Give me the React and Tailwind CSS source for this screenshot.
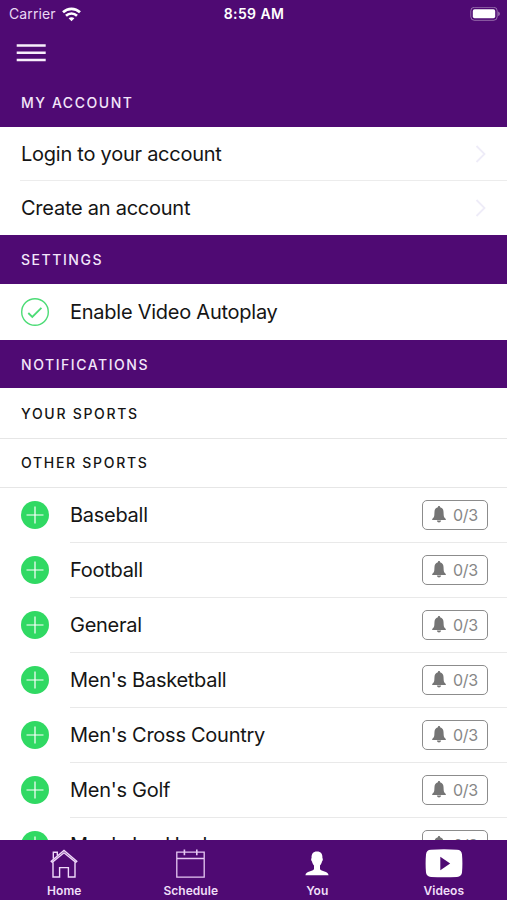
import React from "react";
import clsx from "clsx";

const sports = [
  "Baseball",
  "Football",
  "General",
  "Men's Basketball",
  "Men's Cross Country",
  "Men's Golf",
  "Men's Ice Hockey",
];

const WifiIcon = () => (
  <svg width="19" height="15" viewBox="0 0 19 15" fill="none" stroke="white" strokeWidth="2.6">
    <path d="M1 5.3C5.8 .7 13.2 .7 18 5.3" />
    <path d="M4 8.7C7.1 5.7 11.9 5.7 15 8.7" />
    <path d="M9.5 14.3L6.6 11.3C8.2 9.8 10.8 9.8 12.4 11.3Z" fill="white" stroke="none" />
  </svg>
)

const BatteryIcon = () => (
  <svg width="31" height="15" viewBox="0 0 31 15" fill="none">
    <rect x="0.8" y="0.3" width="26.4" height="13" rx="3.6" stroke="white" strokeOpacity="0.4" />
    <rect x="2.8" y="2.3" width="22.4" height="9" rx="1.8" fill="white" />
    <path d="M28.2 4.5v4.6c2.2-.9 2.2-3.7 0-4.6Z" fill="white" fillOpacity="0.45" />
  </svg>
)

const MenuIcon = () => (
  <svg width="30" height="20" viewBox="0 0 30 20" stroke="#f8effc" strokeWidth="2.4">
    <path d="M.7 2.5h29M.7 9.7h29M.7 17h29" />
  </svg>
)

const ChevronIcon = () => (
  <svg width="12" height="20" viewBox="0 0 12 20" fill="none" stroke="#eeecf8" strokeWidth="1.8">
    <path d="M1.5 2L9.5 10L1.5 18" />
  </svg>
)

const CheckIcon = () => (
  <svg width="28" height="28" viewBox="0 0 28 28" fill="none" stroke="#4cdc76">
    <circle cx="14" cy="14" r="13.3" strokeWidth="1.4" />
    <path d="M7.3 15l4 4L20.4 9.8" strokeWidth="1.8" />
  </svg>
)

const PlusIcon = () => (
  <svg className="mb-px" width="28" height="28" viewBox="0 0 28 28" fill="none">
    <circle cx="14" cy="14" r="14" fill="#30d963" />
    <path d="M14 5.5v17M5.5 14h17" stroke="white" strokeWidth="1.2" />
  </svg>
)

const BellIcon = () => (
  <svg className="mb-0.5" width="14" height="17" viewBox="0 0 14 17" fill="#757575">
    <path d="M7 0C6.3 0 5.9.5 5.9 1.2 3.6 1.8 2.6 3.5 2.5 5.7L2.3 9.2C2.2 11 1.2 12 .2 13.1V14h13.6v-.9c-1-1.1-2-2.1-2.1-3.9l-.2-3.5C11.4 3.5 10.4 1.8 8.1 1.2 8.1.5 7.7 0 7 0Z" />
    <path d="M4.8 14.6h4.4c-.3 1.2-1.1 1.9-2.2 1.9s-1.9-.7-2.2-1.9Z" />
  </svg>
)

const HomeIcon = () => (
  <svg width="28" height="30" viewBox="0 0 28 30" fill="none" stroke="#f0d9fa" strokeWidth="1.4">
    <path d="M1.2 12.2L14 1.5L26.8 12.2L25.7 13.4L14 3.8L2.3 13.4Z" />
    <path d="M3.3 9.8V3.3H7.3V6.5" />
    <path d="M3 13.2V28H9.6V18.6H18.4V28H25V13.2" />
  </svg>
)

const CalendarIcon = () => (
  <svg width="30" height="30" viewBox="0 0 30 30" fill="none" stroke="#e6c8f3" strokeWidth="1.3">
    <path d="M.8 3.2H28.2V28.1H.8ZM.8 9.5H28.2" />
    <path d="M8.4 .6V6.2M20.8 .6V6.2" strokeWidth="1.6" />
  </svg>
)

const PersonIcon = () => (
  <svg width="24" height="26" viewBox="0 0 24 26" fill="white">
    <path d="M12 .4C8 .4 6.3 3 6.6 7 5.8 7.5 6.1 9.7 7 10.6 7.4 12.4 8.1 13.7 9 14.6V17.9C7.8 20.7 1 19.7.4 24.2H23.6C23 19.7 16.2 20.7 15 17.9V14.6C15.9 13.7 16.6 12.4 17 10.6 17.9 9.7 18.2 7.5 17.4 7 17.7 3 16 .4 12 .4Z" />
  </svg>
)

const VideoIcon = () => (
  <svg width="38" height="30" viewBox="0 0 38 30">
    <path d="M6 .8Q19 -.2 32 .8Q36.6 1 37 5.5Q37.8 14.5 37 23.5Q36.6 27.5 32 27.9Q19 28.8 6 27.9Q1.4 27.5 1 23.5Q.2 14.5 1 5.5Q1.4 1 6 .8Z" fill="white" />
    <path d="M15.3 7.7V21.2L25.2 14.5Z" fill="#4f0a73" />
  </svg>
)

const SectionHeader = ({ children, className }) => (
  <div className={clsx("flex shrink-0 items-center bg-[#4f0a73] pl-[21px] text-sm font-medium tracking-[1.55px] text-[#f3e6fa]", className)}>
    {children}
  </div>
)

const SubHeader = ({ children, className }) => (
  <div className={clsx("flex shrink-0 items-center border-b border-[#e6e6e6] pl-[21px] text-sm font-medium tracking-[1.7px]", className)}>
    {children}
  </div>
)

const AccountRow = ({ label, last }) => (
  <div className="shrink-0 pl-5">
    <div className={clsx("flex h-[54px] items-center justify-between pr-5 pl-px", !last && "border-b border-[#ececec]")}>
      <span className="text-xl tracking-[-0.25px]">{label}</span>
      <ChevronIcon />
    </div>
  </div>
)

const SportRow = ({ name }) => (
  <div className="flex h-[55px] shrink-0 items-center pl-[21px]">
    <PlusIcon />
    <div className="ml-[21px] flex h-full flex-1 items-center justify-between border-b border-[#e9e9e9] pr-[19px]">
      <span className="text-xl tracking-[-0.27px]">{name}</span>
      <div className="flex h-[30px] w-[66px] items-center justify-center gap-[7px] rounded-[5px] border border-[#8c8c8c] text-base text-[#878787]">
        <BellIcon />
        <span className="tracking-[-0.3px]">0/3</span>
      </div>
    </div>
  </div>
)

const Tab = ({ icon, label }) => (
  <div className="flex flex-1 flex-col items-center pt-2">
    <div className="flex h-[31px] items-center">{icon}</div>
    <span className="mt-1 text-xs leading-4 font-semibold tracking-[0.05px] text-[#efdff8]">{label}</span>
  </div>
)

export default function App() {
  return (
    <div className="flex h-[900px] w-[507px] flex-col overflow-hidden bg-white font-['Inter','Liberation_Sans',sans-serif] text-[#151515]">
      <header className="h-[78px] shrink-0 bg-[#4f0a73] text-white">
        <div className="grid h-7 grid-cols-3 items-center pr-[6px] pl-[9px]">
          <div className="flex items-center gap-[6px] text-sm text-[#ead8f3]">
            <span className="tracking-[0.1px]">Carrier</span>
            <WifiIcon />
          </div>
          <span className="pr-0.5 text-center text-sm font-semibold tracking-[0.4px]">8:59 AM</span>
          <div className="flex justify-end"><BatteryIcon /></div>
        </div>
        <div className="pt-[15px] pl-4">
          <MenuIcon />
        </div>
      </header>

      <main className="flex min-h-0 flex-1 flex-col overflow-hidden">
        <SectionHeader className="h-[49px]">MY ACCOUNT</SectionHeader>
        <AccountRow label="Login to your account" />
        <AccountRow label="Create an account" last />
        <SectionHeader className="h-[49px]">SETTINGS</SectionHeader>
        <div className="flex h-14 shrink-0 items-center gap-[21px] pl-[21px]">
          <CheckIcon />
          <span className="text-xl tracking-[-0.25px]">Enable Video Autoplay</span>
        </div>
        <SectionHeader className="h-12 pt-px">NOTIFICATIONS</SectionHeader>
        <SubHeader className="h-[51px] pt-px">YOUR SPORTS</SubHeader>
        <SubHeader className="h-[49px]">OTHER SPORTS</SubHeader>
        {sports.map((name) => <SportRow key={name} name={name} />)}
      </main>

      <nav className="flex h-[60px] shrink-0 bg-[#4f0a73] pl-px">
        <Tab icon={<HomeIcon />} label="Home" />
        <Tab icon={<CalendarIcon />} label="Schedule" />
        <Tab icon={<PersonIcon />} label="You" />
        <Tab icon={<VideoIcon />} label="Videos" />
      </nav>
    </div>
  )
}
